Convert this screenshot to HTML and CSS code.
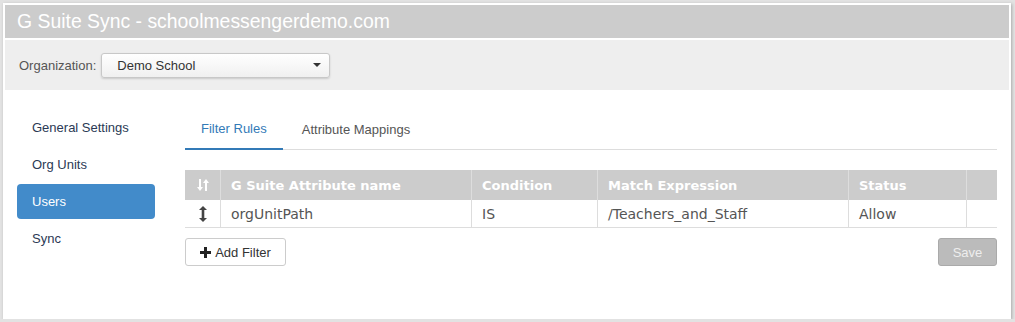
FILE: index.html
```html
<!DOCTYPE html>
<html>
<head>
    <meta name="viewport" content="width=device-width, initial-scale=1.0">
    <title>G Suite Sync</title>
    <link rel="stylesheet" href="styles.css">
</head>
<body>
    <div class="panel">
        <div class="title-bar">G Suite Sync - schoolmessengerdemo.com</div>
        <div class="org-bar">
            <span class="org-label">Organization:</span>
            <div class="org-select">
                <span>Demo School</span>
                <span class="caret"></span>
            </div>
        </div>

        <div class="content">
            <ul class="side-nav">
                <li>General Settings</li>
                <li>Org Units</li>
                <li class="active">Users</li>
                <li>Sync</li>
            </ul>

            <div class="main">
                <div class="tabs">
                    <div class="tab active">Filter Rules</div>
                    <div class="tab">Attribute Mappings</div>
                </div>

                <table class="rules">
                    <thead>
                        <tr>
                            <th class="col-icon">
                                <svg width="12" height="14" viewBox="0 0 12 14">
                                    <path d="M2 1h2v8h2l-3 4-3-4h2z" fill="#fff"/>
                                    <path d="M8 13h2V5h2L9 1 6 5h2z" fill="#fff"/>
                                </svg>
                            </th>
                            <th class="col-name">G Suite Attribute name</th>
                            <th class="col-cond">Condition</th>
                            <th class="col-match">Match Expression</th>
                            <th class="col-status">Status</th>
                            <th class="col-end"></th>
                        </tr>
                    </thead>
                    <tbody>
                        <tr>
                            <td class="col-icon">
                                <svg width="8" height="16" viewBox="0 0 8 16">
                                    <path d="M4 0l4 4H5.3v8H8l-4 4-4-4h2.7V4H0z" fill="#444"/>
                                </svg>
                            </td>
                            <td>orgUnitPath</td>
                            <td>IS</td>
                            <td>/Teachers_and_Staff</td>
                            <td>Allow</td>
                            <td></td>
                        </tr>
                    </tbody>
                </table>

                <div class="actions">
                    <button class="btn-add">
                        <svg width="11" height="11" viewBox="0 0 11 11">
                            <path d="M4 0h3v4h4v3H7v4H4V7H0V4h4z" fill="#222"/>
                        </svg>
                        Add Filter
                    </button>
                    <button class="btn-save" disabled>Save</button>
                </div>
            </div>
        </div>
    </div>
</body>
</html>
```

FILE: styles.css
```css
body {
    margin: 0;
    background: #e2e2e2;
    font-family: "Liberation Sans", Arial, sans-serif;
    font-size: 13px;
    color: #333;
}
.panel {
    width: 1004px;
    height: 312px;
    margin: 3px 0 0 3px;
    padding: 2px;
    background: #fff;
    box-shadow: 1px 1px 3px rgba(0, 0, 0, 0.25);
}
.title-bar {
    height: 33px;
    line-height: 33px;
    padding-left: 12px;
    background: #cccccc;
    color: #fff;
    font-size: 19.4px;
}
.org-bar {
    margin-top: 2px;
    height: 50px;
    background: #eeeeee;
    display: flex;
    align-items: center;
    padding-left: 14px;
}
.org-label {
    color: #555;
    margin-right: 5px;
}
.org-select {
    width: 212px;
    height: 23px;
    padding: 0 0 0 15px;
    display: flex;
    align-items: center;
    justify-content: space-between;
    background: linear-gradient(#fff, #f0f0f0);
    border: 1px solid #c8c8c8;
    border-radius: 3px;
    box-shadow: 0 1px 2px rgba(0, 0, 0, 0.15);
    color: #333;
}
.caret {
    width: 0;
    height: 0;
    margin-right: 8px;
    border-left: 4px solid transparent;
    border-right: 4px solid transparent;
    border-top: 4px solid #333;
}
.content {
    display: flex;
    padding: 20px 12px 0 12px;
}
.side-nav {
    list-style: none;
    margin: 0;
    padding: 0;
    width: 138px;
    margin-right: 30px;
}
.side-nav li {
    height: 35px;
    line-height: 35px;
    margin-bottom: 2px;
    padding-left: 15px;
    color: #2b3a55;
    border-radius: 4px;
}
.side-nav li.active {
    background: #428bca;
    color: #fff;
}
.main {
    flex: 1;
}
.tabs {
    display: flex;
    border-bottom: 1px solid #ddd;
    height: 39px;
}
.tab {
    padding: 0 16px;
    line-height: 39px;
    color: #555;
    margin-bottom: -1px;
    margin-right: 3px;
}
.tab.active {
    color: #337ab7;
    border-bottom: 2px solid #337ab7;
    height: 38px;
    line-height: 38px;
}
.rules {
    margin-top: 20px;
    width: 100%;
    border-collapse: collapse;
    font-family: "DejaVu Sans", Verdana, sans-serif;
}
.rules th {
    background: #cccccc;
    color: #fff;
    font-size: 13px;
    font-weight: bold;
    text-align: left;
    height: 30px;
    padding: 0 10px;
    border-left: 1px solid #ddd;
}
.rules td {
    height: 27px;
    padding: 0 10px;
    color: #555;
    font-size: 14px;
    border-left: 1px solid #ddd;
    border-bottom: 1px solid #ddd;
}
.rules th:first-child,
.rules td:first-child {
    border-left: none;
}
.rules .col-icon {
    width: 15px;
    text-align: center;
}
.rules svg {
    display: block;
    margin: 0 auto;
}
.col-name { width: 230px; }
.col-cond { width: 105px; }
.col-match { width: 230px; }
.col-status { width: 97px; }
.actions {
    display: flex;
    justify-content: space-between;
    margin-top: 10px;
}
.actions button {
    font-family: "Liberation Sans", Arial, sans-serif;
    font-size: 13px;
    height: 28px;
    border-radius: 3px;
    cursor: pointer;
}
.btn-add {
    width: 101px;
    background: #fff;
    color: #333;
    border: 1px solid #ccc;
    display: flex;
    align-items: center;
    justify-content: center;
    gap: 4px;
}
.btn-save {
    width: 59px;
    background: #bbbbbb;
    color: #eee;
    border: 1px solid #aaa;
}
```
